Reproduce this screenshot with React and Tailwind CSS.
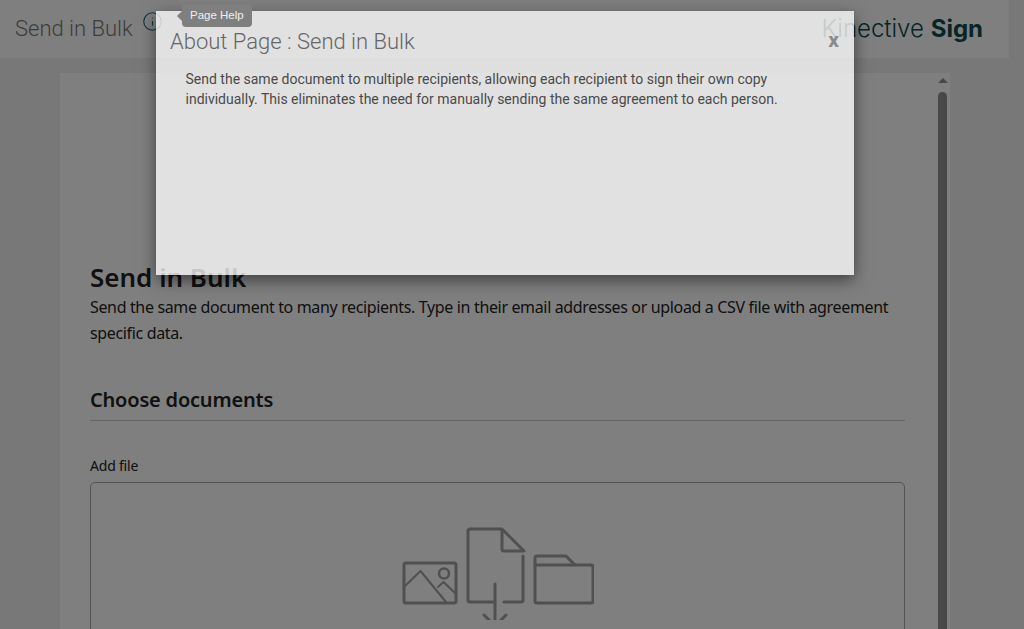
import { Info } from "lucide-react";

function UploadIcons() {
    return (
        <svg width="192" height="96" viewBox="0 0 192 96" fill="none" stroke="#a0a0a0" strokeWidth="3" strokeLinejoin="round" strokeLinecap="round" className="block">
            {/* image */}
            <rect x="2" y="39" width="52" height="40" rx="2" />
            <path d="M2 63 L18.500 47 L44 78" strokeWidth="2" />
            <path d="M36 63 L41.500 58 L54 70" strokeWidth="2" />
            <circle cx="42" cy="49.500" r="5" strokeWidth="2.500" />
            {/* document */}
            <path d="M91 78 H68 a2 2 0 0 1 -2 -2 V7 a2 2 0 0 1 2 -2 H100 L122 27 H102 a2 2 0 0 1 -2 -2 V5" />
            <path d="M102 78 H119 a2 2 0 0 0 2 -2 V32" />
            {/* arrow */}
            <path d="M93 60 V96" />
            <path d="M82 91 L93 102 L104 91" />
            {/* folder */}
            <path d="M133 77 a2 2 0 0 0 2 2 H189 a2 2 0 0 0 2 -2 V43 a2 2 0 0 0 -2 -2 H133 Z" />
            <path d="M133 41 V34 a2 2 0 0 1 2 -2 H164 L173 41" />
        </svg>
    );
}

export default function App() {
    return (
        <div className="relative h-screen overflow-hidden bg-[#f0f0f0] font-['Noto_Sans',sans-serif]">
            {/* Header */}
            <header className="flex h-[58px] w-[1009px] items-center justify-between bg-white pl-[15px] pr-[26px]">
                <div className="flex items-start">
                    <h1 className="font-['Roboto',sans-serif] text-[22px] font-light leading-[30px] text-[#7a7a7a]">Send in Bulk</h1>
                    <Info className="ml-[9px] -mt-[3px] h-[21px] w-[21px] text-[#1a5c85]" strokeWidth={1.25} />
                </div>
                <div className="font-['Inter',sans-serif] text-[24px] font-light leading-[30px] text-[#0e4a4f]">
                    Kinective <span className="font-bold">Sign</span>
                </div>
            </header>

            {/* Page panel */}
            <main className="ml-[60px] mt-[15px] flex h-[700px] w-[890px] bg-white">
                <div className="w-[845px] shrink-0 pl-[30px] pr-0 pt-[188px]">
                    <h2 className="text-[26px] font-semibold leading-[32px] text-[#222]">Send in Bulk</h2>
                    <p className="mt-[1px] text-[16px] leading-[26px] tracking-[-0.35px] text-[#222]">
                        Send the same document to many recipients. Type in their email addresses or upload a CSV file with agreement specific data.
                    </p>
                    <h3 className="mt-[38px] border-b border-[#c8c8c8] pb-[4px] text-[20px] font-semibold leading-[32px] tracking-[-0.2px] text-[#222]">Choose documents</h3>
                    <div className="mt-[36px] text-[14px] leading-[18px] tracking-[-0.2px] text-[#222]">Add file</div>
                    <div className="mt-[7px] flex h-[300px] justify-center rounded-[5px] border border-[#a8a8a8] pt-[41px] pl-[1px]">
                        <UploadIcons />
                    </div>
                </div>
                <div className="flex flex-1 flex-col items-start pl-[33px] pt-[5px]">
                    <div className="h-0 w-0 border-x-[5px] border-b-[5px] border-x-transparent border-b-[#909090]" />
                    <div className="mt-[9px] h-[600px] w-[9px] rounded-t-full bg-[#909090]" />
                </div>
            </main>

            {/* Dim layer */}
            <div className="absolute inset-0 bg-black/50" />

            {/* Dialog */}
            <div className="absolute left-[156px] top-[11px] h-[264px] w-[698px] bg-white/[.764] font-['Roboto',sans-serif] shadow-[0_5px_15px_rgba(0,0,0,0.5)]">
                <div className="flex items-start justify-between pl-[14px] pr-[15px] pt-[16px]">
                    <h4 className="text-[22px] font-light leading-[30px] text-[#666]">About Page : Send in Bulk</h4>
                    <span className="-mt-[2px] text-[21px] font-bold leading-[30px] text-[#8a8a8a]">x</span>
                </div>
                <p className="mt-[12px] pl-[29.5px] pr-[60px] text-[14px] leading-[20px] text-[#4a4a4a]">
                    Send the same document to multiple recipients, allowing each recipient to sign their own copy individually. This eliminates the need for manually sending the same agreement to each person.
                </p>
            </div>

            {/* Tooltip */}
            <div className="absolute left-[182px] top-[4px] rounded-[4px] bg-[#7f7f7f] px-[8px] font-['Liberation_Sans',sans-serif] text-[11.500px] leading-[23px] text-[#f0f0f0]">
                Page Help
                <span className="absolute -left-[5px] top-[7px] h-0 w-0 border-y-[5px] border-r-[5px] border-y-transparent border-r-[#7f7f7f]" />
            </div>
        </div>
    );
}
